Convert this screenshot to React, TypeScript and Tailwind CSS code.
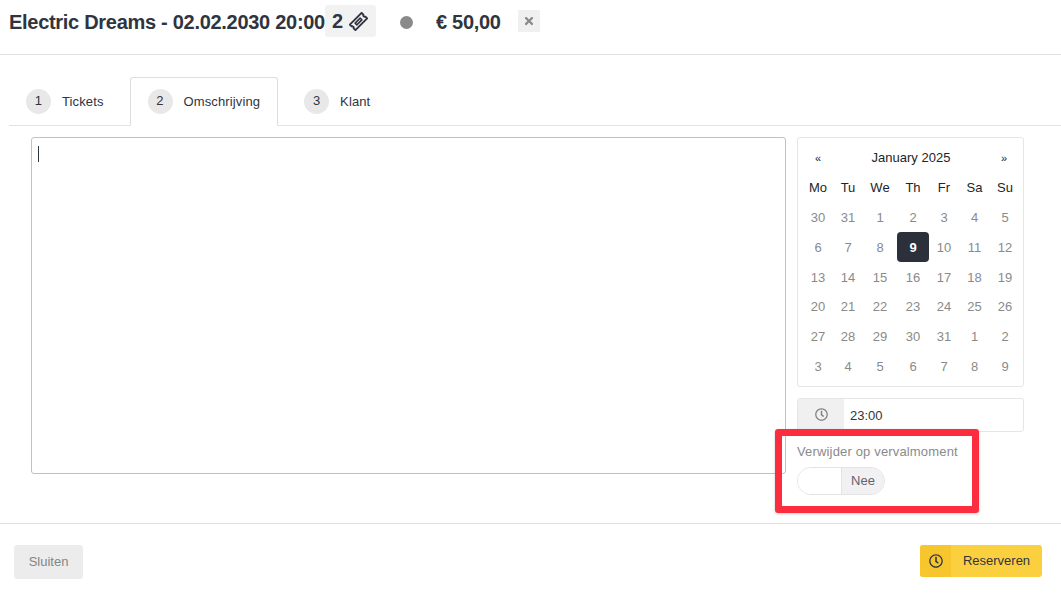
import { FaRegClock, FaTimes } from "react-icons/fa";

const weekDays = ["Mo", "Tu", "We", "Th", "Fr", "Sa", "Su"];
const days = [
  30, 31, 1, 2, 3, 4, 5, 6, 7, 8, 9, 10, 11, 12, 13, 14, 15, 16, 17, 18, 19, 20, 21, 22, 23, 24, 25, 26, 27, 28, 29, 30,
  31, 1, 2, 3, 4, 5, 6, 7, 8, 9,
];
const tabs = [
  { nr: 1, label: "Tickets" },
  { nr: 2, label: "Omschrijving", active: true },
  { nr: 3, label: "Klant" },
];

function TicketIcon() {
  return (
    <svg viewBox="0 0 24 24" className="size-[19px]" fill="none" stroke="currentColor" strokeLinejoin="round">
      <g transform="rotate(-45 12 12)">
        <path
          strokeWidth="2.4"
          d="M1.5 7h21v3.2a2 2 0 0 0 0 3.6V17h-21v-3.2a2 2 0 0 0 0-3.6z"
        />
        <rect x="7.5" y="10.5" width="9" height="3" strokeWidth="2" />
      </g>
    </svg>
  );
}

function Calendar() {
  return (
    <div className="h-[250px] rounded-[3px] border border-[#e6e6e6] pt-[5px] text-[13px]">
      <div className="flex h-[30px] items-center justify-between pl-[17px] pr-[16px] text-[#212529]">
        <span className="text-[11px]">«</span>
        <span>January 2025</span>
        <span className="text-[11px]">»</span>
      </div>
      <div className="ml-[5px] grid grid-cols-[30px_30px_34px_32px_30px_31px_30px] auto-rows-[29.8px] text-center">
        {weekDays.map((day) => (
          <div key={day} className="flex items-center justify-center text-[#212529]">
            {day}
          </div>
        ))}
        {days.map((day, i) =>
          i === 10 ? (
            <div key={i} className="-mt-px flex items-center justify-center rounded-[4px] bg-[#2b303b] pt-px font-bold text-white">
              {day}
            </div>
          ) : (
            <div key={i} className="flex items-center justify-center text-[#8a8a8a]">
              {day}
            </div>
          ),
        )}
      </div>
    </div>
  );
}

export default function App() {
  return (
    <div className="relative h-[593px] w-[1061px] overflow-hidden bg-white font-['Liberation_Sans',Arial,sans-serif] text-[#2f3540]">
      <header className="flex h-[55px] items-start border-b border-[#e0e0e0] pl-[9px]">
        <h1 className="mt-[9px] w-[316px] whitespace-nowrap text-[20px] font-bold leading-[26px] tracking-[-0.29px]">
          Electric Dreams - 02.02.2030 20:00
        </h1>
        <div className="mt-[5px] flex h-[32px] w-[51px] items-center gap-[6px] rounded-[3px] bg-[#f2f2f2] pl-[7px] text-[20px] font-bold">
          <span>2</span>
          <TicketIcon />
        </div>
        <div className="ml-[24px] mt-[16px] size-[13px] rounded-full bg-[#8a8a8a]" />
        <div className="ml-[23px] mt-[9px] w-[82px] whitespace-nowrap text-[20px] font-bold leading-[26px] tracking-[-0.29px]">
          € 50,00
        </div>
        <button type="button" className="mt-[10px] flex size-[22px] items-center justify-center bg-[#f0f0f0] text-[#8a8a8a]">
          <FaTimes className="size-[12px]" />
        </button>
      </header>

      <nav className="ml-[9px] mt-[22px] flex h-[49px] items-end gap-[8px] border-b border-[#e3e3e3] text-[13px] tracking-[0.12px]">
        {tabs.map((tab) => (
          <div
            key={tab.nr}
            className={
              tab.active
                ? "relative -mb-px flex h-[49px] items-center gap-[11px] rounded-t-[3px] border border-b-white border-[#dedede] bg-white px-[17px]"
                : "-mb-px flex h-[49px] items-center gap-[11px] border border-transparent px-[17px] first:-ml-px"
            }
          >
            <span className="flex size-[25px] items-center justify-center rounded-full bg-[#e8e8e8] pb-[2px]">{tab.nr}</span>
            <span>{tab.label}</span>
          </div>
        ))}
      </nav>

      <main className="ml-[31px] mt-[11px] flex h-[337px] items-start gap-[11px]">
        <div className="h-[337px] w-[755px] rounded-[3px] border border-[#bfc0cc] pl-[6px] pt-[8px]">
          <div className="h-[16px] w-px bg-[#2f3540]" />
        </div>
        <div className="w-[227px]">
          <Calendar />
          <div className="mt-[11px] flex h-[34px] rounded-[3px] border border-[#e6e6e6] text-[13px]">
            <div className="flex w-[46px] items-center justify-center bg-[#f0f0f0] pb-px text-[#7d7d7d]">
              <FaRegClock className="size-[13px]" />
            </div>
            <div className="flex items-center pl-[6px] pt-px text-[#2f3540]">23:00</div>
          </div>
          <div className="mt-[12px] text-[13px] leading-[16px] tracking-[0.16px] text-[#8a8a8a]">Verwijder op vervalmoment</div>
          <div className="mt-[7px] flex h-[28px] w-[88px] overflow-hidden rounded-full border border-[#e3e3e3] text-[13px]">
            <div className="w-[43px] bg-white" />
            <div className="flex flex-1 items-center justify-center border-l border-[#e3e3e3] bg-[#f1f1f3] text-[#5f6470]">
              Nee
            </div>
          </div>
        </div>
      </main>

      <footer className="mt-[49px] flex h-[70px] items-start justify-between border-t border-[#e0e0e0] pl-[14px] pr-[19px] pt-[21px] text-[13px]">
        <button type="button" className="h-[34px] w-[69px] rounded-[3px] bg-[#ececec] text-[#858585]">
          Sluiten
        </button>
        <button type="button" className="flex h-[32px] w-[122px] overflow-hidden rounded-[3px] bg-[#fbd03f] text-[#2f3540]">
          <span className="flex h-full w-[31px] items-center justify-center bg-[#f7c52c]">
            <FaRegClock className="size-[14px]" />
          </span>
          <span className="flex flex-1 items-center justify-center">Reserveren</span>
        </button>
      </footer>

      <div className="absolute left-[775px] top-[429px] h-[84px] w-[204px] rounded-[3px] border-[7px] border-[#fb2d3f] shadow-[0_1px_3px_rgba(0,0,0,0.2)]" />
    </div>
  );
}
